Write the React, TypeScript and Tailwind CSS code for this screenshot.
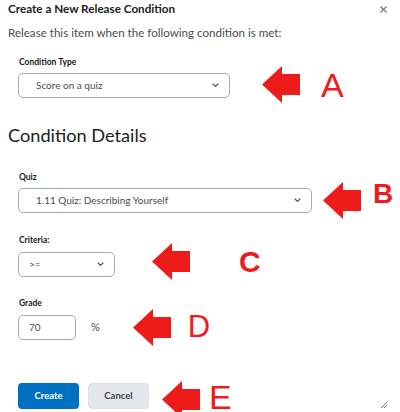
const font = { fontFamily: 'Lato, "Open Sans", sans-serif' }
const letterFont = { fontFamily: '"Liberation Sans", Arial, sans-serif' }

function RedArrow() {
  return (
    <svg width="38" height="37" viewBox="0 0 38 37" className="shrink-0">
      <polygon points="0,18.5 20,0 20,8 38,8 38,29 20,29 20,37" fill="#ee1b1b" />
    </svg>
  )
}

function Chevron() {
  return (
    <svg width="7" height="5" viewBox="0 0 7 5" className="shrink-0">
      <path d="M1 1 L3.5 3.5 L6 1" fill="none" stroke="#565a5c" strokeWidth="1.2" strokeLinecap="round" />
    </svg>
  )
}

function Select({ width, text, padLeft }: { width: string; text: string; padLeft: string }) {
  return (
    <div
      className={`${width} ${padLeft} flex h-[25px] shrink-0 items-center justify-between rounded-[5px] border border-[#a8abb0] bg-white pr-[10px] text-[10px] text-[#494c4e]`}
    >
      <span>{text}</span>
      <Chevron />
    </div>
  )
}

function Label({ children, top }: { children: string; top: string }) {
  return (
    <div className={`${top} ml-[11px] text-[8.5px] font-bold leading-[12px] text-[#202122]`}>{children}</div>
  )
}

export default function App() {
  return (
    <div className="relative h-[412px] w-[400px] overflow-hidden bg-white" style={font}>
      <div className="flex flex-col px-[8px]">
        <div className="flex h-[18px] items-center justify-between">
          <h1 className="text-[11.7px] font-bold text-[#202122]">Create a New Release Condition</h1>
          <svg width="7" height="7" viewBox="0 0 7 7" className="mr-[5px]">
            <path d="M0.5 0.5 L6.5 6.5 M6.5 0.5 L0.5 6.5" stroke="#6e7376" strokeWidth="1.1" />
          </svg>
        </div>
        <p className="mt-[7px] text-[11.6px] leading-[16px] text-[#494c4e]">
          Release this item when the following condition is met:
        </p>

        <Label top="mt-[15px]">Condition Type</Label>
        <div className="mt-[5px] flex h-[25px] items-center">
          <div className="ml-[10px]">
            <Select width="w-[212px]" text="Score on a quiz" padLeft="pl-[17px]" />
          </div>
          <div className="ml-[32px] mt-[-2px]">
            <RedArrow />
          </div>
          <span className="ml-[21px] mt-[-1px] text-[34px] leading-none text-[#ee1b1b]" style={letterFont}>
            A
          </span>
        </div>

        <h2 className="mt-[25px] text-[18.2px] leading-[24px] text-[#202122]">Condition Details</h2>

        <Label top="mt-[24px]">Quiz</Label>
        <div className="mt-[5px] flex h-[25px] items-center">
          <div className="ml-[10px]">
            <Select width="w-[294px]" text="1.11 Quiz: Describing Yourself" padLeft="pl-[17px]" />
          </div>
          <div className="ml-[11px]">
            <RedArrow />
          </div>
          <span className="ml-[12px] mt-[-14px] text-[28px] font-bold leading-none text-[#ee1b1b]" style={letterFont}>
            B
          </span>
        </div>

        <Label top="mt-[21px]">Criteria:</Label>
        <div className="mt-[6px] flex h-[25px] items-center">
          <div className="ml-[10px]">
            <Select width="w-[97px]" text=">=" padLeft="pl-[10px]" />
          </div>
          <div className="ml-[37px] mt-[-6px]">
            <RedArrow />
          </div>
          <span className="ml-[49px] mt-[-6px] text-[30px] font-bold leading-none text-[#ee1b1b]" style={letterFont}>
            C
          </span>
        </div>

        <Label top="mt-[20px]">Grade</Label>
        <div className="mt-[6px] flex h-[25px] items-center">
          <div className="ml-[10px] flex h-[25px] w-[58px] shrink-0 items-center rounded-[5px] border border-[#a8abb0] pl-[10px] text-[10px] text-[#494c4e]">
            70
          </div>
          <span className="ml-[15px] text-[11px] text-[#494c4e]">%</span>
          <div className="ml-[33px]">
            <RedArrow />
          </div>
          <span className="ml-[17px] mt-[-2px] text-[31px] leading-none text-[#ee1b1b]" style={letterFont}>
            D
          </span>
        </div>

        <div className="mt-[43px] flex h-[26px] items-center">
          <button className="ml-[10px] h-[26px] w-[61px] shrink-0 rounded-[4px] bg-[#0070c0] text-[9.5px] font-bold text-white">
            Create
          </button>
          <button className="ml-[9px] h-[26px] w-[61px] shrink-0 rounded-[4px] border border-[#dde1e6] bg-[#e3e7ec] text-[9.5px] font-bold text-[#3f4244]">
            Cancel
          </button>
          <div className="ml-[13px] mt-[6px]">
            <RedArrow />
          </div>
          <span className="ml-[9px] mt-[3px] text-[34px] leading-[25px] text-[#ee1b1b]" style={letterFont}>
            E
          </span>
        </div>
      </div>

      <svg width="8" height="8" viewBox="0 0 8 8" className="absolute bottom-[3px] right-[12px]">
        <path d="M7 1 L1 7 M7 4 L4 7" stroke="#777" strokeWidth="1" />
      </svg>
    </div>
  )
}
